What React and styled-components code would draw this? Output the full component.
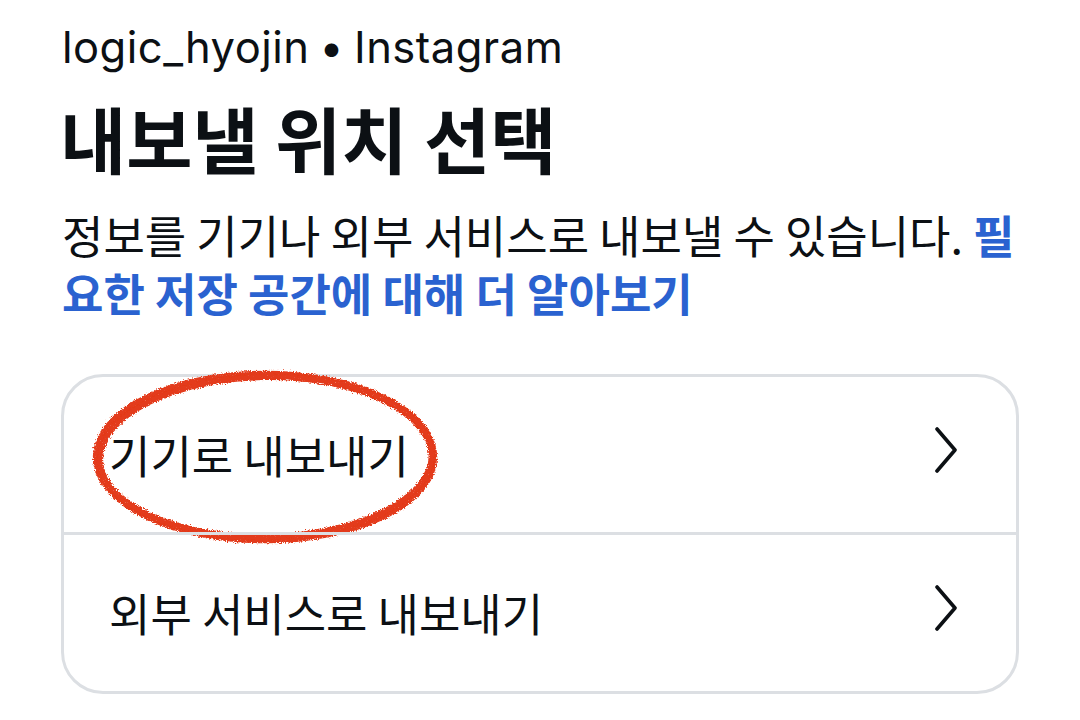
import React from "react";
import styled, { createGlobalStyle } from "styled-components";

const Global = createGlobalStyle`
  html, body { margin: 0; padding: 0; background: #ffffff; }
  body { width: 1080px; height: 720px; overflow: hidden; }
`;

const FONT = `"Noto Sans CJK KR", "Noto Sans", sans-serif`;

const Page = styled.div`
  box-sizing: border-box;
  width: 1080px;
  height: 720px;
  padding: 20px 62px 0 62px;
  font-family: ${FONT};
  color: #0c1014;
  display: flex;
  flex-direction: column;
`;

const Account = styled.div`
  font-family: "Inter", "Roboto", sans-serif;
  font-size: 43.5px;
  line-height: 54px;
  letter-spacing: 0.5px;
  word-spacing: -3px;
`;

const Title = styled.h1`
  margin: 20px 0 0 -2px;
  font-size: 72px;
  line-height: 86px;
  font-weight: 700;
  letter-spacing: 0;
`;

const Desc = styled.p`
  margin: 26px 0 0 0;
  font-size: 45px;
  line-height: 58px;
  font-weight: 400;
`;

const Link = styled.span`
  color: #2a62d0;
  font-weight: 700;
`;

const Card = styled.div`
  margin: 52px 0 0 -1px;
  width: 958px;
  box-sizing: border-box;
  border: 3px solid #dcdfe3;
  border-radius: 42px;
  display: flex;
  flex-direction: column;
`;

const Row = styled.div`
  position: relative;
  height: ${(p) => p.$h}px;
  display: flex;
  align-items: center;
  justify-content: space-between;
  padding: 0 58px 0 45px;
  border-top: ${(p) => (p.$divider ? "3px solid #dcdfe3" : "none")};
`;

const Label = styled.span`
  font-size: 45px;
  line-height: 56px;
  color: #0c1014;
`;

const Chevron = styled.svg`
  width: 24px;
  height: 46px;
  flex: none;
  margin-top: -10px;
`;

const Scribble = styled.svg`
  position: absolute;
  left: 26px;
  top: -10px;
  width: 360px;
  height: 184px;
  pointer-events: none;
  overflow: visible;
`;

function ChevronIcon() {
  return (
    <Chevron viewBox="0 0 24 46">
      <path
        d="M3 2 L21 23 L3 44"
        fill="none"
        stroke="#0c1014"
        strokeWidth="3.6"
        strokeLinecap="round"
        strokeLinejoin="round"
      />
    </Chevron>
  );
}

function RedCircle() {
  return (
    <Scribble viewBox="0 0 360 184">
      <defs>
        <filter id="crayon" x="-10%" y="-10%" width="120%" height="120%">
          <feTurbulence type="fractalNoise" baseFrequency="0.8" numOctaves="2" seed="3" result="noise" />
          <feDisplacementMap in="SourceGraphic" in2="noise" scale="5" xChannelSelector="R" yChannelSelector="G" result="disp" />
          <feTurbulence type="fractalNoise" baseFrequency="1.4" numOctaves="1" seed="7" result="grain" />
          <feColorMatrix in="grain" type="matrix"
            values="0 0 0 0 0  0 0 0 0 0  0 0 0 0 0  0 0 0 -2.2 2.5" result="grainAlpha" />
          <feComposite in="disp" in2="grainAlpha" operator="in" />
        </filter>
      </defs>
      <g filter="url(#crayon)" fill="none" stroke="#e33a1a" strokeLinecap="round">
        <ellipse cx="175" cy="90" rx="168" ry="82" strokeWidth="8.5" />
        <ellipse cx="176" cy="90" rx="166" ry="80" strokeWidth="6" transform="rotate(-1 176 90)" />
      </g>
    </Scribble>
  );
}

export default function App() {
  return (
    <>
      <Global />
      <Page>
        <Account>logic_hyojin • Instagram</Account>
        <Title>내보낼 위치 선택</Title>
        <Desc>
          정보를 기기나 외부 서비스로 내보낼 수 있습니다. <Link>필</Link>
          <br />
          <Link>요한 저장 공간에 대해 더 알아보기</Link>
        </Desc>
        <Card>
          <Row $h={155}>
            <RedCircle />
            <Label>기기로 내보내기</Label>
            <ChevronIcon />
          </Row>
          <Row $h={156} $divider>
            <Label>외부 서비스로 내보내기</Label>
            <ChevronIcon />
          </Row>
        </Card>
      </Page>
    </>
  );
}
